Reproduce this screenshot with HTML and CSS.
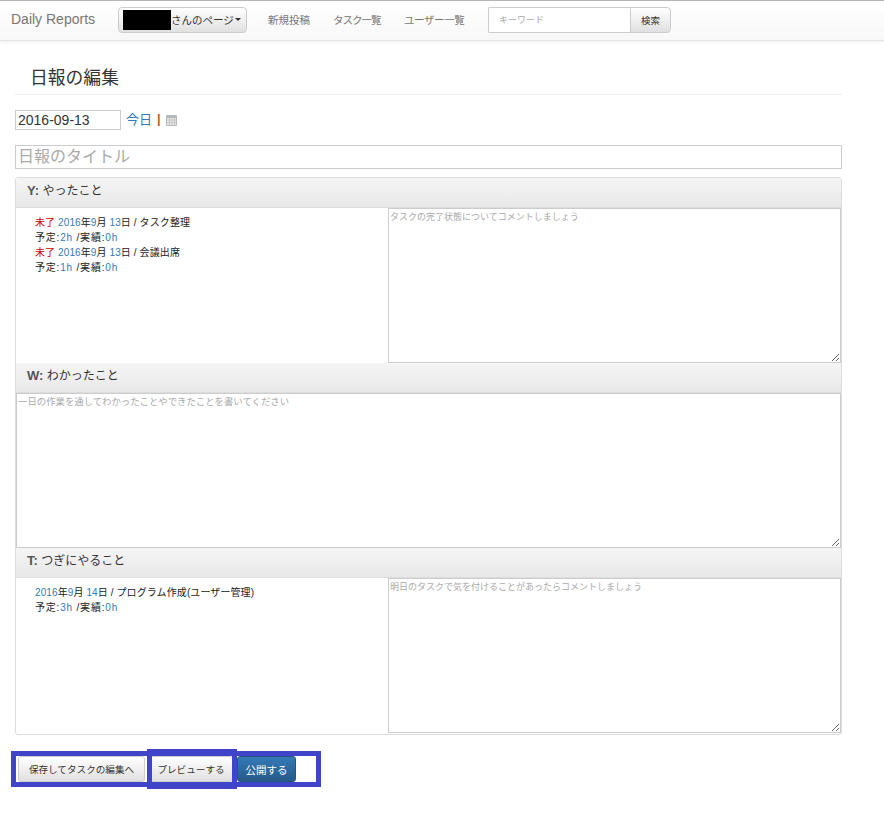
FILE: index.html
```html
<!DOCTYPE html>
<html lang="ja">
<head>
    <meta charset="UTF-8">
    <title>Daily Reports</title>
    <link rel="stylesheet" href="styles.css">
</head>
<body>
    <nav class="navbar">
        <a class="brand">Daily Reports</a>
        <button class="user-btn"><span class="mask"></span>さんのページ<span class="caret"></span></button>
        <ul class="nav-links">
            <li class="nav-post">新規投稿</li>
            <li class="nav-task">タスク一覧</li>
            <li class="nav-user">ユーザー一覧</li>
        </ul>
        <form class="search">
            <input class="search-input" type="text" placeholder="キーワード">
            <button class="search-btn" type="button">検索</button>
        </form>
    </nav>

    <main class="content">
        <h1 class="page-title">日報の編集</h1>

        <div class="date-row">
            <input class="date-input" type="text" value="2016-09-13">
            <a class="today">今日</a>
            <span class="sep">|</span>
            <svg class="cal" width="11" height="11" viewBox="0 0 11 11">
                <rect x="0" y="0" width="11" height="11" rx="1" fill="#b4b8bc"/>
                <rect x="1" y="3" width="9" height="7" fill="#e8e8e8"/>
                <path d="M1 5h9M1 7.5h9M3.5 3v7M6 3v7M8.5 3v7" stroke="#c8c8c8" stroke-width="1"/>
            </svg>
        </div>

        <input class="title-input" type="text" placeholder="日報のタイトル">

        <section class="panel">
            <h2 class="panel-head"><b>Y:</b> やったこと</h2>
            <div class="split">
                <div class="tasks">
                    <p><span class="red">未了</span> <span class="blue">2016</span>年<span class="blue">9</span>月 <span class="blue">13</span>日 / タスク整理</p>
                    <p class="plan">予定:<span class="blue">2h</span> /実績:<span class="blue">0h</span></p>
                    <p><span class="red">未了</span> <span class="blue">2016</span>年<span class="blue">9</span>月 <span class="blue">13</span>日 / 会議出席</p>
                    <p class="plan">予定:<span class="blue">1h</span> /実績:<span class="blue">0h</span></p>
                </div>
                <textarea class="note" placeholder="タスクの完了状態についてコメントしましょう"></textarea>
            </div>

            <h2 class="panel-head"><b>W:</b> わかったこと</h2>
            <textarea class="note wide" placeholder="一日の作業を通してわかったことやできたことを書いてください"></textarea>

            <h2 class="panel-head"><b>T:</b> つぎにやること</h2>
            <div class="split">
                <div class="tasks">
                    <p><span class="blue">2016</span>年<span class="blue">9</span>月 <span class="blue">14</span>日 / プログラム作成(ユーザー管理)</p>
                    <p class="plan">予定:<span class="blue">3h</span> /実績:<span class="blue">0h</span></p>
                </div>
                <textarea class="note" placeholder="明日のタスクで気を付けることがあったらコメントしましょう"></textarea>
            </div>
        </section>

        <div class="actions">
            <button class="btn btn-save">保存してタスクの編集へ</button>
            <button class="btn btn-preview">プレビューする</button>
            <button class="btn btn-publish">公開する</button>
            <div class="frame frame-all"></div>
            <div class="frame frame-preview"></div>
        </div>
    </main>
</body>
</html>
```

FILE: styles.css
```css
body{
    margin: 0;
    background-color: #fff;
    font-family: "Liberation Sans", "Noto Sans CJK JP", sans-serif;
    font-size: 11px;
    color: #333;
}
button, input, textarea{
    font-family: "Liberation Sans", "Noto Sans CJK JP", sans-serif;
    box-sizing: border-box;
    margin: 0;
}
input::placeholder, textarea::placeholder{
    color: #aaa;
    opacity: 1;
}

.navbar{
    display: flex;
    align-items: center;
    height: 41px;
    box-sizing: border-box;
    border-top: 1px solid #b5b5b5;
    border-bottom: 1px solid #e4e4e4;
    padding-left: 11px;
    padding-bottom: 2px;
    background: linear-gradient(to bottom, #fff, #f8f8f8);
    box-shadow: 0 1px 4px rgba(0, 0, 0, 0.07);
}
.brand{
    width: 107px;
    margin-top: -1px;
    font-size: 14px;
    color: #777;
}
.user-btn{
    display: flex;
    align-items: center;
    width: 129px;
    height: 26px;
    padding: 0 4px;
    border: 1px solid #ccc;
    border-radius: 4px;
    background: linear-gradient(to bottom, #fff, #e0e0e0);
    font-size: 10.5px;
    color: #333;
    white-space: nowrap;
}
.mask{
    flex: none;
    width: 48px;
    height: 20px;
    background-color: #000;
}
.caret{
    margin-left: 1px;
    border-top: 3px solid #333;
    border-left: 3px solid transparent;
    border-right: 3px solid transparent;
}
.nav-links{
    display: flex;
    list-style: none;
    margin: 0 0 0 21px;
    padding: 0;
    width: 220px;
    color: #777;
    font-size: 10.5px;
}
.nav-post{
    width: 65px;
}
.nav-task{
    width: 71px;
    letter-spacing: -1px;
}
.nav-user{
    letter-spacing: -0.4px;
}
.search{
    display: flex;
    margin: 0;
}
.search-input{
    width: 142px;
    height: 26px;
    padding: 0 10px;
    border: 1px solid #ccc;
    border-right: 0;
    border-radius: 2px 0 0 2px;
    font-size: 9px;
}
.search-btn{
    width: 41px;
    height: 26px;
    padding: 0;
    border: 1px solid #ccc;
    border-radius: 0 4px 4px 0;
    background: linear-gradient(to bottom, #fff, #e0e0e0);
    font-size: 9.5px;
    color: #333;
}

.content{
    width: 827px;
    margin-left: 15px;
    padding-bottom: 34px;
}
.page-title{
    margin: 27px 0 15px;
    padding: 0 0 5px 15px;
    border-bottom: 1px solid #eee;
    font-size: 17.8px;
    font-weight: normal;
    line-height: 21px;
    color: #333;
}
.date-row{
    display: flex;
    align-items: center;
    height: 20px;
}
.date-input{
    width: 106px;
    height: 20px;
    padding: 0 2px;
    border: 1px solid #ccc;
    font-size: 14px;
    color: #333;
}
.today{
    margin-left: 5px;
    margin-top: -3px;
    font-size: 13px;
    color: #337ab7;
}
.sep{
    margin-left: 5px;
    margin-top: -3px;
    font-size: 13px;
    font-weight: bold;
    color: #b5651d;
}
.cal{
    margin-left: 5px;
}
.title-input{
    display: block;
    width: 100%;
    height: 24px;
    margin-top: 15px;
    padding: 0 2px;
    border: 1px solid #ccc;
    font-size: 16px;
}

.panel{
    margin-top: 8px;
    border: 1px solid #ddd;
    border-radius: 3px;
    box-sizing: border-box;
    height: 558px;
}
.panel-head{
    height: 30px;
    margin: 0;
    padding-left: 11px;
    box-sizing: border-box;
    border-bottom: 1px solid #ddd;
    background: linear-gradient(to bottom, #f5f5f5, #e8e8e8);
    font-size: 12px;
    font-weight: normal;
    line-height: 25px;
    color: #333;
}
.panel-head b{
    font-size: 13px;
    color: #555;
}
.split{
    display: flex;
    height: 155px;
}
.tasks{
    width: 372px;
    padding: 7px 0 0 19px;
    box-sizing: border-box;
    color: #222;
}
.tasks p{
    margin: 0;
    font-size: 10px;
    line-height: 15px;
    letter-spacing: 0.1px;
}
.tasks .plan{
    letter-spacing: 0.8px;
}
.red{
    color: #c00;
}
.blue{
    color: #337ab7;
}
.note{
    display: block;
    width: 453px;
    height: 155px;
    padding: 1px;
    border: 1px solid #ccc;
    font-size: 9px;
    line-height: 14px;
}
.note.wide{
    width: 825px;
    font-size: 9.4px;
}

.actions{
    position: relative;
    display: flex;
    gap: 4px;
    margin-top: 21px;
    margin-left: 3px;
}
.btn{
    height: 26px;
    padding: 0;
    border: 1px solid #ccc;
    border-radius: 3px;
    background: linear-gradient(to bottom, #fff, #e0e0e0);
    font-size: 9.6px;
    color: #333;
}
.btn-save{
    width: 127px;
}
.btn-preview{
    width: 84px;
}
.btn-publish{
    width: 59px;
    border-color: #245580;
    background: linear-gradient(to bottom, #337ab7, #265a88);
    font-size: 10.5px;
    color: #fff;
}
.frame{
    position: absolute;
    box-sizing: border-box;
    border: 5px solid #4044c8;
    pointer-events: none;
}
.frame-all{
    left: -7px;
    top: -5px;
    width: 310px;
    height: 36px;
}
.frame-preview{
    left: 129px;
    top: -7px;
    width: 90px;
    height: 40px;
}
```
